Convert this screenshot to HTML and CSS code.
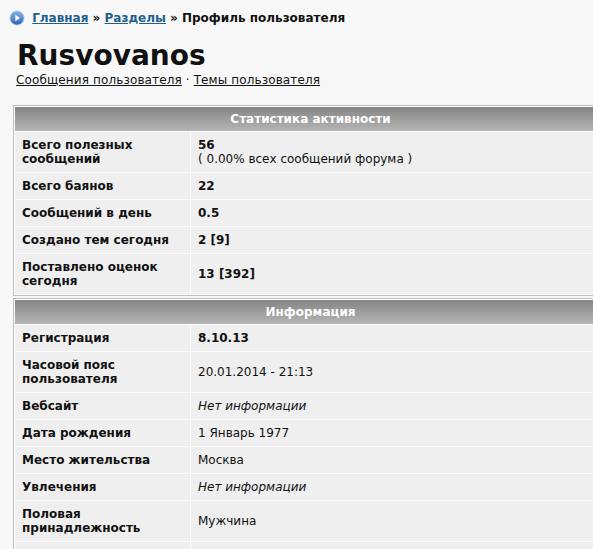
FILE: index.html
```html
<!DOCTYPE html>
<html lang="ru">
<head>
    <meta charset="UTF-8">
    <title>Профиль пользователя | Rusvovanos</title>
    <link rel="stylesheet" href="styles.css">
</head>
<body>

    <!-- Breadcrumbs -->
    <div class="crumbs">
        <svg class="crumbs-icon" width="16" height="16" viewBox="0 0 16 16">
            <defs>
                <linearGradient id="ball" x1="0" y1="0" x2="0" y2="1">
                    <stop offset="0" stop-color="#8db4ea"/>
                    <stop offset="1" stop-color="#2e63b8"/>
                </linearGradient>
            </defs>
            <circle cx="8" cy="8" r="7.2" fill="url(#ball)" stroke="#c9d8ee" stroke-width="1"/>
            <path d="M6.3 4.8 L11 8 L6.3 11.2 Z" fill="#fff"/>
        </svg>
        <a href="#">Главная</a> &raquo; <a href="#">Разделы</a> &raquo; Профиль пользователя
    </div>

    <!-- Profile header -->
    <h1 class="user-name">Rusvovanos</h1>
    <div class="user-links">
        <a href="#">Сообщения пользователя</a> &middot; <a href="#">Темы пользователя</a>
    </div>

    <!-- Activity stats -->
    <table class="profile-table">
        <tr><th colspan="2">Статистика активности</th></tr>
        <tr>
            <td class="label">Всего полезных сообщений</td>
            <td class="value"><b>56</b><br>( 0.00% всех сообщений форума )</td>
        </tr>
        <tr><td class="label">Всего баянов</td><td class="value"><b>22</b></td></tr>
        <tr><td class="label">Сообщений в день</td><td class="value"><b>0.5</b></td></tr>
        <tr><td class="label">Создано тем сегодня</td><td class="value"><b>2 [9]</b></td></tr>
        <tr><td class="label">Поставлено оценок сегодня</td><td class="value"><b>13 [392]</b></td></tr>
    </table>

    <!-- General info -->
    <table class="profile-table">
        <tr><th colspan="2">Информация</th></tr>
        <tr><td class="label">Регистрация</td><td class="value"><b>8.10.13</b></td></tr>
        <tr><td class="label">Часовой пояс пользователя</td><td class="value">20.01.2014 - 21:13</td></tr>
        <tr><td class="label">Вебсайт</td><td class="value"><i>Нет информации</i></td></tr>
        <tr><td class="label">Дата рождения</td><td class="value">1 Январь 1977</td></tr>
        <tr><td class="label">Место жительства</td><td class="value">Москва</td></tr>
        <tr><td class="label">Увлечения</td><td class="value"><i>Нет информации</i></td></tr>
        <tr><td class="label">Половая принадлежность</td><td class="value">Мужчина</td></tr>
        <tr><td class="label">&nbsp;</td><td class="value">&nbsp;</td></tr>
    </table>

</body>
</html>
```

FILE: styles.css
```css
/* Page basics */
html {
    overflow: hidden;
}

body {
    margin: 0;
    padding: 0;
    background-color: #f8f8f8;
    font-family: "DejaVu Sans", Verdana, sans-serif;
    font-size: 12px;
    color: #111;
}

a {
    color: #111;
}

/* Breadcrumbs */
.crumbs {
    padding: 10px 0 0 9px;
    line-height: 16px;
    font-weight: bold;
}

.crumbs a {
    color: #1f5f8b;
}

.crumbs-icon {
    display: inline-block;
    vertical-align: -4px;
    margin-right: 3px;
}

/* User name and links */
.user-name {
    margin: 14px 0 0 17px;
    font-size: 28px;
    line-height: 32px;
}

.user-links {
    margin: 1px 0 18px 16px;
    line-height: 14px;
    letter-spacing: 0.12px;
}

/* Profile tables */
.profile-table {
    width: 595px;
    margin: 0 0 2px 13px;
    border: 1px solid #bdbdbd;
    border-spacing: 1px;
    background-color: #fcfcfc;
}

.profile-table th {
    height: 24px;
    padding: 0;
    background: linear-gradient(#858585, #b5b5b5);
    color: #fff;
    font-size: 12px;
    line-height: 14px;
}

.profile-table td {
    padding: 6px 7px;
    background-color: #efefef;
    line-height: 14px;
    vertical-align: middle;
}

.profile-table .label {
    width: 161px;
    font-weight: bold;
}
```
